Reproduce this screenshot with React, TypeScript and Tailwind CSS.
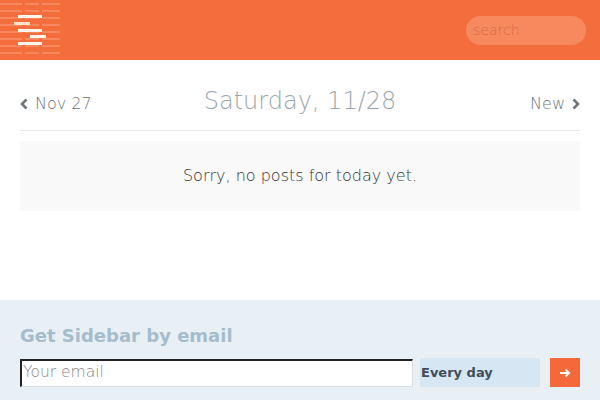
const stripeRows = [3, 10, 17, 24, 31, 38, 45, 52];

function Logo() {
  return (
    <svg width="60" height="60" viewBox="0 0 60 60">
      {stripeRows.map((y) => (
        <g key={y} fill="#f7875f">
          <rect x="0" y={y} width="22" height="2" />
          <rect x="25" y={y} width="14" height="2" />
          <rect x="42" y={y} width="18" height="2" />
        </g>
      ))}
      <rect x="18" y="15" width="24" height="3" fill="#fff4ea" />
      <rect x="14" y="22" width="16" height="3" fill="#ffe3c8" />
      <rect x="18" y="29" width="24" height="3" fill="#fff4ea" />
      <rect x="30" y="35" width="16" height="3" fill="#fff4ea" />
      <rect x="18" y="42" width="24" height="3" fill="#fff4ea" />
    </svg>
  );
}

function Chevron({ dir }: { dir: "left" | "right" }) {
  return (
    <svg width="9" height="12" viewBox="0 0 9 12" fill="none" stroke="#6f767b" strokeWidth="2.6">
      {dir === "left" ? <path d="M6.5 1.5 2 6l4.5 4.5" /> : <path d="M2.5 1.5 7 6l-4.5 4.5" />}
    </svg>
  );
}

export default function App() {
  return (
    <div className="h-[400px] w-[600px] overflow-hidden bg-white font-['DejaVu_Sans',sans-serif]">
      <header className="flex h-[60px] items-center justify-between bg-[#f46d3c] pr-[14px]">
        <Logo />
        <div className="flex h-[29px] w-[120px] items-center rounded-full bg-[#f7895f] px-[7px] text-[14px] font-extralight text-[#cf6a47]">
          search
        </div>
      </header>

      <main className="px-5">
        <div className="grid h-[71px] grid-cols-[1fr_auto_1fr] items-center border-b border-[#e6e6e6] pt-[12px]">
          <div className="mt-[6px] flex items-center gap-[6px] text-[16px] font-extralight text-[#6c757b]">
            <Chevron dir="left" />
            Nov 27
          </div>
          <div className="text-[24px] font-extralight text-[#9ba6ac]">Saturday, 11/28</div>
          <div className="mt-[6px] flex items-center justify-end gap-[6px] text-[16px] font-extralight text-[#6c757b]">
            New
            <Chevron dir="right" />
          </div>
        </div>
        <div className="mt-[10px] flex h-[70px] items-center justify-center bg-[#f9f9f9] text-[16px] font-extralight text-[#333]">
          Sorry, no posts for today yet.
        </div>
      </main>

      <section className="mt-[89px] h-[100px] bg-[#e8f0f6] px-5 pt-[22px]">
        <h2 className="text-[18px] font-bold leading-7 text-[#a5bccb]">Get Sidebar by email</h2>
        <div className="mt-[8px] flex items-center">
          <div className="flex h-[28px] w-[393px] items-center border-t-2 border-l-2 border-t-[#222] border-l-[#222] border-b border-r border-b-[#ddd] border-r-[#ddd] bg-white pl-[1px] text-[15.5px] font-extralight text-[#888]">
            Your email
          </div>
          <div className="ml-[7px] flex h-[29px] w-[120px] items-center bg-[#d6e6f2] pl-[1px] text-[13px] font-bold text-[#3e4e5b]">
            Every day
          </div>
          <div className="ml-[10px] flex h-[29px] w-[30px] items-center justify-center bg-[#f4683a] text-white">
            <svg width="12" height="12" viewBox="0 0 12 12" fill="none" stroke="white" strokeWidth="2">
              <path d="M1 6h9M6.5 2.5 10 6l-3.5 3.5" />
            </svg>
          </div>
        </div>
      </section>
    </div>
  );
}
